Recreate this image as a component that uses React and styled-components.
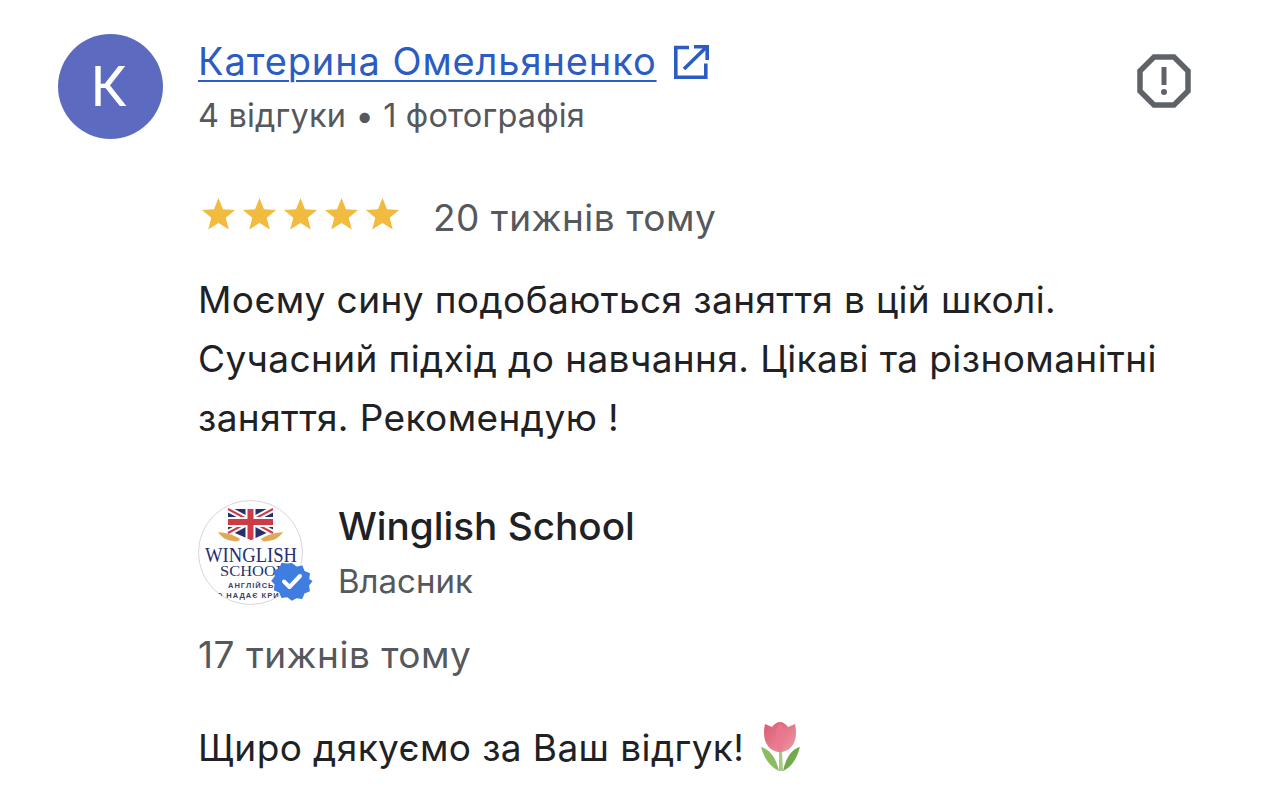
import React from "react";
import styled, { createGlobalStyle } from "styled-components";

const GlobalStyle = createGlobalStyle`
  html, body {
    margin: 0;
    padding: 0;
    background: #fff;
  }
  body {
    font-family: Inter, Roboto, "Liberation Sans", sans-serif;
  }
`;

const Page = styled.div`
  width: 1280px;
  height: 799px;
  overflow: hidden;
  box-sizing: border-box;
  padding: 34px 0 0 58px;
  display: grid;
  grid-template-columns: 105px 1fr;
  column-gap: 35px;
  color: #202124;
`;

const Avatar = styled.div`
  width: 105px;
  height: 105px;
  border-radius: 50%;
  background: #5c6bc0;
  color: #fff;
  font-size: 56px;
  font-family: Roboto, sans-serif;
  padding-right: 4px;
  box-sizing: border-box;
  display: flex;
  align-items: center;
  justify-content: center;
`;

const Content = styled.div`
  display: flex;
  flex-direction: column;
  width: 993px;
`;

const Header = styled.div`
  display: flex;
  justify-content: space-between;
  align-items: flex-start;
`;

const NameRow = styled.div`
  display: flex;
  align-items: center;
  gap: 16px;
  height: 54px;
`;

const Name = styled.a`
  font-size: 38px;
  letter-spacing: 0.9px;
  color: #2b5cc4;
  text-decoration: underline;
  text-decoration-thickness: 2px;
  text-underline-offset: 5px;
`;

const ExternalSpot = styled.span`
  display: inline-flex;
  margin-top: 2px;
`;

const Meta = styled.div`
  font-size: 32.5px;
  letter-spacing: 0.17px;
  line-height: 38px;
  margin-top: 9px;
  color: #55585c;
`;

const FlagButton = styled.div`
  margin-top: 20px;
  width: 54px;
  height: 54px;
`;

const RatingRow = styled.div`
  display: flex;
  align-items: center;
  gap: 30px;
  margin-top: 57px;
  height: 44px;
`;

const Stars = styled.div`
  display: flex;
`;

const When = styled.div`
  font-size: 37px;
  letter-spacing: 0.5px;
  color: #55585c;
`;

const RatingWhen = styled(When)`
  margin-top: 6px;
`;

const Body = styled.p`
  margin: 34px 0 0;
  font-size: 37px;
  letter-spacing: 0.4px;
  line-height: 59px;
  color: #202124;
`;

const Owner = styled.div`
  display: flex;
  align-items: flex-start;
  gap: 35px;
  margin-top: 53px;
`;

const LogoWrap = styled.div`
  position: relative;
  width: 105px;
  height: 105px;
`;

const BadgeSpot = styled.div`
  position: absolute;
  right: -10px;
  bottom: 3px;
  line-height: 0;
`;

const OwnerText = styled.div`
  display: flex;
  flex-direction: column;
`;

const OwnerName = styled.div`
  font-size: 38.7px;
  font-weight: 500;
  line-height: 52px;
  color: #202124;
`;

const OwnerRole = styled.div`
  font-size: 33px;
  line-height: 40px;
  margin-top: 9px;
  color: #55585c;
`;

const ReplyWhen = styled(When)`
  margin-top: 27px;
  line-height: 46px;
`;

const Reply = styled.div`
  display: flex;
  align-items: center;
  margin-top: 40px;
  font-size: 37px;
  letter-spacing: 0.4px;
  line-height: 60px;
  color: #202124;
`;

const TulipWrap = styled.span`
  display: inline-flex;
  margin-left: 17px;
  margin-top: -3px;
`;

const Star = () => (
  <svg width="41" height="34" viewBox="0 0 41 34">
    <path
      d="M20.5.9L25 12.25 37.1 13 27.7 20.75 30.8 32.6 20.5 26 10.2 32.6 13.3 20.75 3.9 13 16 12.25z"
      fill="#f1bb3f"
    />
  </svg>
);

const ExternalIcon = () => (
  <svg width="36" height="36" viewBox="0 0 36 36" fill="none" stroke="#2b5cc4" strokeWidth="3.6">
    <path d="M16 3.5H2.8v29.7h30V19.5" />
    <path d="M11 25L33 3.5" />
    <path d="M21 2.8h13.2V16" />
  </svg>
);

const FlagIcon = () => (
  <svg width="54" height="54" viewBox="0 0 54 54">
    <path
      d="M17 3h20l14 14v20L37 51H17L3 37V17z"
      fill="none"
      stroke="#5f6368"
      strokeWidth="5.5"
    />
    <rect x="24.5" y="13" width="5" height="18" fill="#5f6368" />
    <circle cx="27" cy="38" r="3" fill="#5f6368" />
  </svg>
);

const SchoolLogo = () => (
  <svg width="105" height="105" viewBox="0 0 105 105">
    <defs>
      <clipPath id="logoClip">
        <circle cx="52.5" cy="52.5" r="52" />
      </clipPath>
    </defs>
    <circle cx="52.5" cy="52.5" r="52" fill="#fff" stroke="#d6d6da" strokeWidth="1" />
    <g clipPath="url(#logoClip)">
      <path d="M30 9h45v21l-22 10-23-10z" fill="#26306e" />
      <path d="M30 9l45 24M75 9L30 33" stroke="#fff" strokeWidth="6" />
      <path d="M30 9l45 24M75 9L30 33" stroke="#cf3a47" strokeWidth="2" />
      <path d="M52.5 9v30M30 22h45" stroke="#fff" strokeWidth="10" />
      <path d="M52.5 9v30M30 22h45" stroke="#cf3a47" strokeWidth="6" />
      <path d="M20 32c7 1 15 2 22 7-1 2-3 3-6 2-7 0-13-4-16-9zM85 32c-7 1-15 2-22 7 1 2 3 3 6 2 7 0 13-4 16-9z" fill="#e0a95a" />
      <text x="7" y="61.5" textLength="92" lengthAdjust="spacingAndGlyphs" fontFamily="'Liberation Serif', serif" fontSize="22" fill="#26306e">
        WINGLISH
      </text>
      <text x="22" y="76" textLength="66" lengthAdjust="spacingAndGlyphs" fontFamily="'Liberation Serif', serif" fontSize="15.5" fill="#26306e">
        SCHOOL
      </text>
      <text x="30" y="87.5" fontFamily="'Liberation Sans', sans-serif" fontWeight="700" fontSize="7.5" letterSpacing="1" fill="#3a3f6e">
        АНГЛІЙСЬКА
      </text>
      <text x="52" y="97.5" textAnchor="middle" fontFamily="'Liberation Sans', sans-serif" fontWeight="700" fontSize="7.5" letterSpacing="1" fill="#3a3f6e">
        ЩО НАДАЄ КРИЛА
      </text>
    </g>
  </svg>
);

const VerifiedBadge = () => (
  <svg width="42" height="42" viewBox="0 0 42 42">
    <path
      d="M21 1l5.2 3.9 6.4-.9 2.5 6 6 2.5-.9 6.4L44 21l-3.9 5.2.9 6.4-6 2.5-2.5 6-6.4-.9L21 43l-5.2-3.9-6.4.9-2.5-6-6-2.5.9-6.4L-2 21l3.9-5.2-.9-6.4 6-2.5 2.5-6 6.4.9z"
      transform="translate(2 2) scale(0.9)"
      fill="#3f7de0"
    />
    <path d="M13 21.5l5.5 5.5L29 16" fill="none" stroke="#fff" strokeWidth="4" strokeLinecap="round" strokeLinejoin="round" />
  </svg>
);

const Tulip = () => (
  <svg width="40" height="50" viewBox="0 0 40 50">
    <defs>
      <linearGradient id="petal" x1="0" y1="0" x2="1" y2="1">
        <stop offset="0" stopColor="#dd5874" />
        <stop offset="1" stopColor="#eb9aa2" />
      </linearGradient>
    </defs>
    <path d="M18 28h3l1 21h-4z" fill="#a9c98a" />
    <path d="M0 25c8 2 15 10 18 24C9 45 3 36 0 25z" fill="#8cbc62" />
    <path d="M39 25c-8 2-14 10-17 24 9-4 14-13 17-24z" fill="#74a84c" />
    <path
      d="M4 2l7 3c2-3 5-5 8-5s6 2 8 5l7-3c2 9 1 17-3 22-3 4-8 6-12 6s-9-2-12-6C3 19 2 11 4 2z"
      fill="url(#petal)"
    />
    <path d="M19 1c5 6 7 14 2 28-1 1-3 1-4 0-5-12-3-22 2-28z" fill="#e9788e" opacity="0.7" />
  </svg>
);

const App = () => {
  return (
    <>
      <GlobalStyle />
      <Page>
        <Avatar>К</Avatar>
        <Content>
          <Header>
            <div>
              <NameRow>
                <Name>Катерина Омельяненко</Name>
                <ExternalSpot>
                  <ExternalIcon />
                </ExternalSpot>
              </NameRow>
              <Meta>4 відгуки • 1 фотографія</Meta>
            </div>
            <FlagButton>
              <FlagIcon />
            </FlagButton>
          </Header>

          <RatingRow>
            <Stars>
              {[0, 1, 2, 3, 4].map((i) => (
                <Star key={i} />
              ))}
            </Stars>
            <RatingWhen>20 тижнів тому</RatingWhen>
          </RatingRow>

          <Body>
            Моєму сину подобаються заняття в цій школі.
            <br />
            Сучасний підхід до навчання. Цікаві та різноманітні
            <br />
            заняття. Рекомендую !
          </Body>

          <Owner>
            <LogoWrap>
              <SchoolLogo />
              <BadgeSpot>
                <VerifiedBadge />
              </BadgeSpot>
            </LogoWrap>
            <OwnerText>
              <OwnerName>Winglish School</OwnerName>
              <OwnerRole>Власник</OwnerRole>
            </OwnerText>
          </Owner>

          <ReplyWhen>17 тижнів тому</ReplyWhen>

          <Reply>
            Щиро дякуємо за Ваш відгук!
            <TulipWrap>
              <Tulip />
            </TulipWrap>
          </Reply>
        </Content>
      </Page>
    </>
  );
};

export default App;
